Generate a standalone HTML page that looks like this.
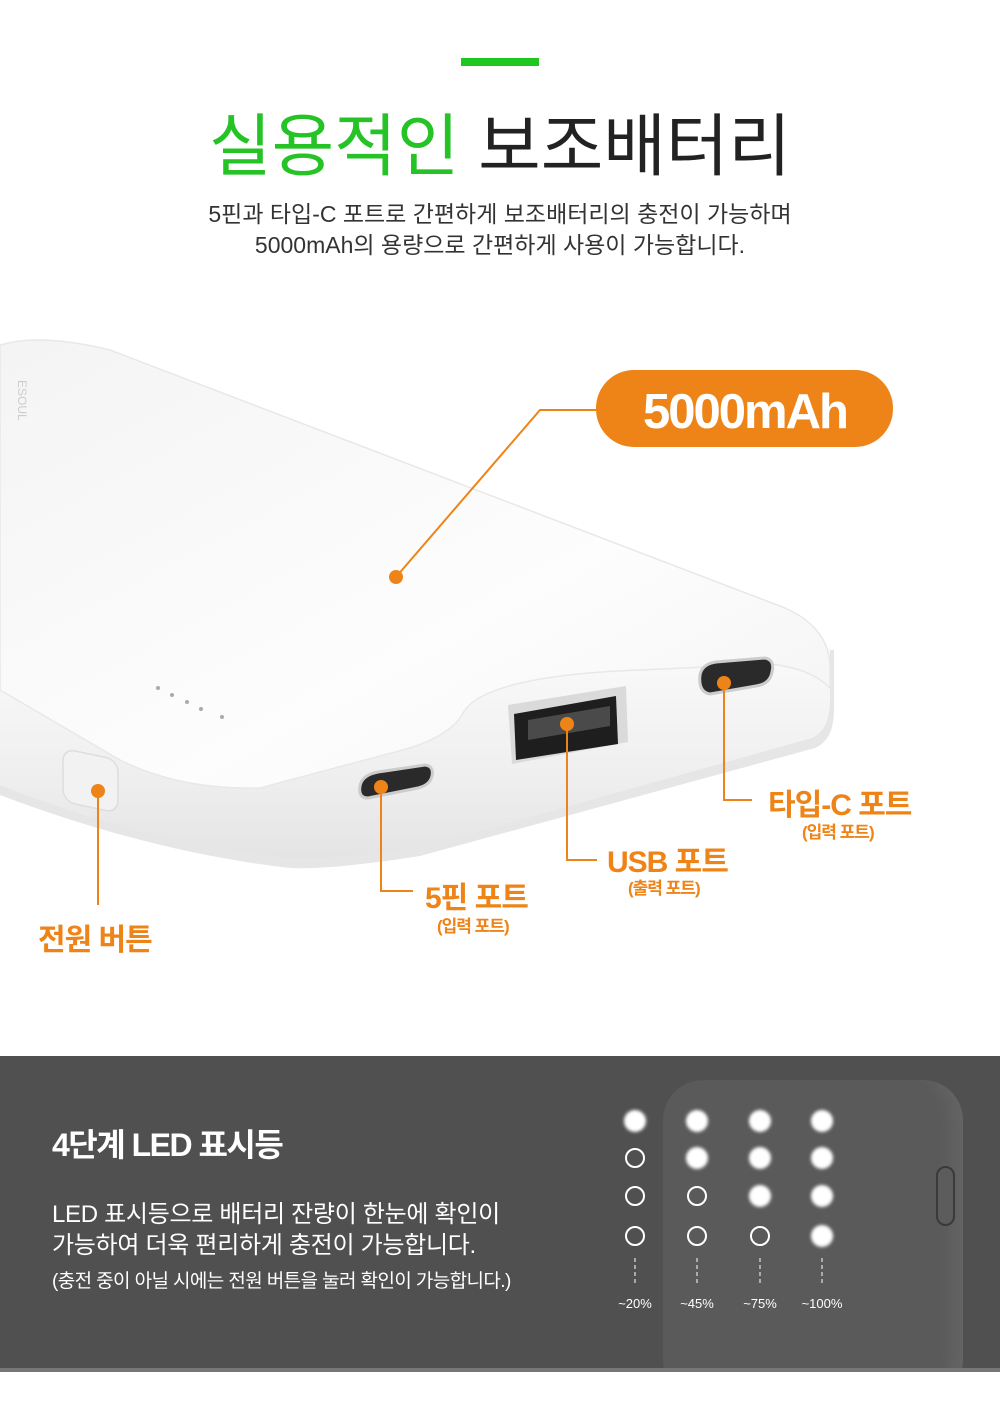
<!DOCTYPE html>
<html><head><meta charset="utf-8"><style>
*{margin:0;padding:0;box-sizing:border-box}
body{width:1000px;height:1423px;background:#fff;position:relative;overflow:hidden;font-family:"Liberation Sans","Noto Sans CJK KR",sans-serif}
.a{position:absolute;white-space:nowrap}
.or{color:#ee8418;font-weight:bold}
</style></head><body>
<div class="a" style="left:461px;top:58px;width:78px;height:8px;background:#1ec81e"></div>
<div class="a" style="left:0;width:1000px;top:104px;text-align:center;font-size:68px;color:#222;line-height:86px"><span style="color:#25c325">실용적인</span> 보조배터리</div>
<div class="a" style="left:0;width:1000px;top:199px;text-align:center;font-size:23px;color:#333;line-height:31px">5핀과 타입-C 포트로 간편하게 보조배터리의 충전이 가능하며<br>5000mAh의 용량으로 간편하게 사용이 가능합니다.</div>

<svg class="a" style="left:0;top:300px" width="1000" height="700" viewBox="0 300 1000 700">
<defs>
<linearGradient id="tf" x1="0" y1="0" x2="1" y2="1"><stop offset="0" stop-color="#f4f4f4"/><stop offset="0.6" stop-color="#fdfdfd"/><stop offset="1" stop-color="#f3f3f3"/></linearGradient>
<linearGradient id="sd" x1="0" y1="0" x2="0" y2="1"><stop offset="0" stop-color="#fafafa"/><stop offset="0.6" stop-color="#efefef"/><stop offset="1" stop-color="#e4e4e4"/></linearGradient>
</defs>
<path d="M0,660 L0,795 Q150,852 290,868 Q330,870 420,856 L815,748 Q834,740 834,710 L834,650 Z" fill="#e6e6e6"/>
<path d="M0,650 L0,785 Q150,845 290,858 Q330,860 420,848 L812,738 Q830,730 830,700 L830,648 Z" fill="url(#sd)"/>
<path d="M0,345 Q40,333 110,350 L785,608 Q830,628 830,668 L830,688 Q810,668 770,664 L640,670 Q480,676 462,715 Q450,735 410,748 L260,788 Q180,790 120,760 L0,690 Z" fill="url(#tf)" stroke="#e8e8e8" stroke-width="1.5"/>
<text x="18" y="380" font-size="12" fill="#ccc" transform="rotate(90 18 380)">ESOUL</text>
<g fill="#aaa"><circle cx="158" cy="688" r="2"/><circle cx="172" cy="695" r="2"/><circle cx="187" cy="702" r="2"/><circle cx="201" cy="709" r="2"/><circle cx="222" cy="717" r="2"/></g>
<rect x="63" y="752" width="55" height="53" rx="12" fill="#f2f2f2" stroke="#ddd" stroke-width="1.5" transform="skewY(12) translate(0,-17)"/>
<path d="M360,786 Q362,775 378,772 L425,765 Q434,766 432,776 Q430,785 418,788 L368,798 Q358,798 360,786Z" fill="#2a2a2a" stroke="#ccc" stroke-width="3"/>
<path d="M508,705 L626,686 L628,742 L512,764 Z" fill="#dadada"/>
<path d="M514,714 L616,696 L618,744 L516,760 Z" fill="#1e1e1e"/>
<path d="M528,720 L610,706 L610,726 L528,740 Z" fill="#4a4a4a"/>
<path d="M700,675 Q702,664 716,662 L765,658 Q775,660 772,672 Q770,684 756,686 L710,694 Q698,692 700,675Z" fill="#2a2a2a" stroke="#ccc" stroke-width="3"/>
<g stroke="#ee8418" stroke-width="2" fill="none">
<polyline points="396,577 540,410 598,410"/>
<polyline points="98,791 98,905"/>
<polyline points="381,787 381,891 413,891"/>
<polyline points="567,724 567,860 597,860"/>
<polyline points="724,683 724,800 752,800"/>
</g>
<g fill="#ee8418"><circle cx="396" cy="577" r="7"/><circle cx="98" cy="791" r="7"/><circle cx="381" cy="787" r="7"/><circle cx="567" cy="724" r="7"/><circle cx="724" cy="683" r="7"/></g>
<rect x="596" y="370" width="297" height="77" rx="38" fill="#ee8418"/>
<text x="745" y="428" font-size="49" font-weight="bold" fill="#fff" text-anchor="middle" font-family="Liberation Sans" letter-spacing="-2">5000mAh</text>
</svg>
<div class="a or" style="left:38px;top:915px;font-size:30px;letter-spacing:-1px">전원 버튼</div>
<div class="a or" style="left:425px;top:873px;font-size:30px;letter-spacing:-1px">5핀 포트</div>
<div class="a or" style="left:437px;top:912px;font-size:17px;letter-spacing:-1px">(입력 포트)</div>
<div class="a or" style="left:607px;top:837px;font-size:30px;letter-spacing:-1px">USB 포트</div>
<div class="a or" style="left:628px;top:874px;font-size:17px;letter-spacing:-1px">(출력 포트)</div>
<div class="a or" style="left:768px;top:780px;font-size:30px;letter-spacing:-1px">타입-C 포트</div>
<div class="a or" style="left:802px;top:818px;font-size:17px;letter-spacing:-1px">(입력 포트)</div>

<div class="a" style="left:0;top:1056px;width:1000px;height:313px;background:#505050;overflow:hidden">
<div class="a" style="left:663px;top:24px;width:300px;height:320px;border-radius:40px;background:#5a5a5a;box-shadow:inset -30px 0 20px -20px #666"></div>
<div class="a" style="left:936px;top:110px;width:19px;height:60px;border-radius:10px;border:2px solid #3a3a3a;background:#5c5c5c"></div>
<div class="a" style="left:52px;top:64px;font-size:32px;font-weight:bold;color:#fff;letter-spacing:-1.5px">4단계 LED 표시등</div>
<div class="a" style="left:52px;top:143px;font-size:24px;color:#fff;line-height:31px;letter-spacing:-0.3px">LED 표시등으로 배터리 잔량이 한눈에 확인이<br>가능하여 더욱 편리하게 충전이 가능합니다.</div>
<div class="a" style="left:52px;top:210px;font-size:19px;color:#fff;letter-spacing:-0.6px">(충전 중이 아닐 시에는 전원 버튼을 눌러 확인이 가능합니다.)</div>
<svg class="a" style="left:600px;top:0" width="260" height="313">
<defs><filter id="g"><feGaussianBlur stdDeviation="1.5"/></filter></defs>
<g fill="#fff" filter="url(#g)">
<circle cx="35" cy="65" r="11"/><circle cx="97" cy="65" r="11"/><circle cx="160" cy="65" r="11"/><circle cx="222" cy="65" r="11"/>
<circle cx="97" cy="102" r="11"/><circle cx="160" cy="102" r="11"/><circle cx="222" cy="102" r="11"/>
<circle cx="160" cy="140" r="11"/><circle cx="222" cy="140" r="11"/>
<circle cx="222" cy="180" r="11"/>
</g>
<g fill="none" stroke="#fff" stroke-width="2">
<circle cx="35" cy="102" r="9"/><circle cx="35" cy="140" r="9"/><circle cx="35" cy="180" r="9"/>
<circle cx="97" cy="140" r="9"/><circle cx="97" cy="180" r="9"/><circle cx="160" cy="180" r="9"/>
<g stroke-width="1" stroke-dasharray="4,3"><line x1="35" y1="202" x2="35" y2="230"/><line x1="97" y1="202" x2="97" y2="230"/><line x1="160" y1="202" x2="160" y2="230"/><line x1="222" y1="202" x2="222" y2="230"/></g>
</g>
<g fill="#fff" font-size="13" text-anchor="middle" font-family="Liberation Sans">
<text x="35" y="252">~20%</text><text x="97" y="252">~45%</text><text x="160" y="252">~75%</text><text x="222" y="252">~100%</text>
</g>
</svg>
</div>
<div class="a" style="left:0;top:1368px;width:1000px;height:4px;background:#777"></div>
</body></html>
